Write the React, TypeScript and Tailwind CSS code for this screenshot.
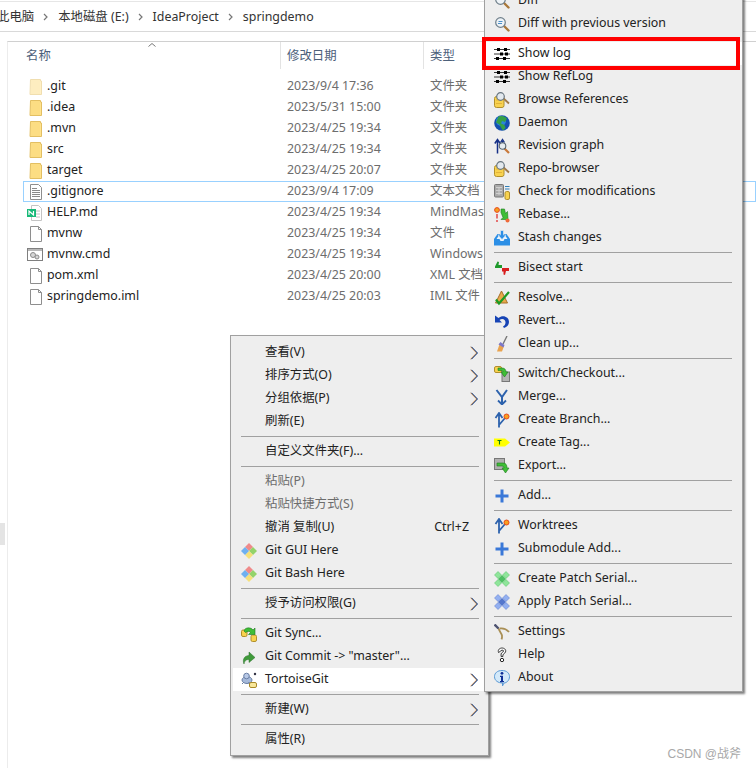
import type { ReactNode } from "react";

const Ico = ({ children }: { children: ReactNode }) => (
  <svg viewBox="0 0 16 16" className="w-4 h-4 shrink-0">
    {children}
  </svg>
);

/* ---- explorer icons ---- */
const Folder = ({ faded }: { faded?: boolean }) => (
  <svg viewBox="0 0 14 16" className={`w-[14px] h-4 shrink-0 ${faded ? "opacity-50" : ""}`}>
    <path d="M1.5 .5h10v1.500h1v13.500h-11.500z" fill="#ffe38f" stroke="#e3bf62" />
    <path d="M2 1h9v14h-9z" fill="#fcdd83" />
  </svg>
);
const Blank = () => (
  <svg viewBox="0 0 14 16" className="w-[14px] h-4 shrink-0">
    <path d="M1.500 .5h8l3 3v12h-11z" fill="#fff" stroke="#8e8e8e" />
    <path d="M9.500 .5v3h3" fill="none" stroke="#8e8e8e" />
  </svg>
);
const TextDoc = () => (
  <svg viewBox="0 0 14 16" className="w-[14px] h-4 shrink-0">
    <path d="M1.500 .5h8l3 3v12h-11z" fill="#fff" stroke="#8e8e8e" />
    <path d="M3 4.500h5M3 6.500h8M3 8.500h8M3 10.500h8M3 12.500h8" stroke="#8a8a8a" />
  </svg>
);
const MindDoc = () => (
  <svg viewBox="0 0 16 16" className="w-4 h-4 shrink-0 -ml-[2px]">
    <path d="M4.500 .5h7l3 3v12h-10z" fill="#fff" stroke="#c4c4c4" />
    <path d="M9 6h4M9 9h4M9 12h4" stroke="#c0c0c0" />
    <rect x="0" y="4" width="9" height="8" fill="#17b978" />
    <path d="M2 10v-4l4.500 4v-4" fill="none" stroke="#fff" strokeWidth="1.200" />
  </svg>
);
const CmdDoc = () => (
  <svg viewBox="0 0 16 16" className="w-4 h-4 shrink-0 -ml-[2px]">
    <rect x=".5" y="1.500" width="15" height="12" fill="#fff" stroke="#7f7f7f" />
    <rect x="1" y="2" width="14" height="2" fill="#b8b8b8" />
    <circle cx="6" cy="8" r="2.500" fill="#d6d6d6" stroke="#8a8a8a" />
    <circle cx="10" cy="10" r="2" fill="#d6d6d6" stroke="#8a8a8a" />
  </svg>
);

/* ---- menu icons ---- */
const Lens = ({ doc }: { doc?: boolean }) => (
  <Ico>
    <path d="M10 10l4.500 4.500" stroke="#a9783a" strokeWidth="2.400" strokeLinecap="round" />
    <circle cx="6.500" cy="6.500" r="4.800" fill="#eef3f7" stroke="#6f7f8a" strokeWidth="1.200" />
    {doc && <path d="M4.500 5.500h4M4 7.500h4" stroke="#4d90c8" />}
  </Ico>
);
const LogLines = () => (
  <Ico>
    <path d="M0 3.500h16M0 8h16M0 12.500h16" stroke="#333" />
    <path d="M3 2h3v3h-3zM10 2h3v3h-3zM6 6.500h3v3h-3zM11 6.500h3v3h-3zM2 11h3v3h-3zM9 11h3v3h-3z" fill="#000" />
  </Ico>
);
const RepoLens = () => (
  <Ico>
    <rect x=".5" y="4.500" width="9.500" height="11" rx="2" fill="#f8d24f" stroke="#b08f2c" />
    <path d="M2 8h6M2 11.500h6" stroke="#e2b33a" />
    <path d="M9 6l6 5.500" stroke="#a07a48" strokeWidth="1.800" />
    <circle cx="6.500" cy="4.500" r="3.800" fill="#e3e9ee" stroke="#68757f" strokeWidth="1.200" />
  </Ico>
);
const Globe = () => (
  <Ico>
    <circle cx="8" cy="8" r="7.800" fill="#1450b0" />
    <circle cx="7" cy="6" r="5" fill="#2a86d8" />
    <path d="M4.500 1.500c3-1.200 6.500-.5 8.500 2l-2 3.500-3-1-1 2.500 3.500 1.500 1 3-2.500 2.500-2-3-1.500-3-3.500-2z" fill="#35a046" />
  </Ico>
);
const RevGraph = () => (
  <Ico>
    <path d="M3.500 15.500v-13M.8 5.500l2.700-4 2.700 4" fill="none" stroke="#142f86" strokeWidth="1.500" />
    <path d="M8.500 8v-5M6.500 4.500l2-3 2 3" fill="none" stroke="#142f86" strokeWidth="1.300" />
    <path d="M10.500 10.500l4.500 4.500" stroke="#c9793a" strokeWidth="2.200" />
    <circle cx="8.500" cy="8" r="3.300" fill="#e6ecf0" stroke="#56636d" strokeWidth="1.100" />
  </Ico>
);
const CheckMods = () => (
  <Ico>
    <rect x=".5" y=".5" width="9" height="12.500" rx="1" fill="#a9a9a9" stroke="#777" />
    <path d="M2 3.500h6M2 6.500h6M2 9.500h6M5 3v8" stroke="#cfcfcf" />
    <path d="M11 2.500h4.500M11 5h4.500" stroke="#2f7fb8" strokeWidth="1.100" />
    <rect x="11" y="7.500" width="4.500" height="8" rx="1.500" fill="#f8d24f" stroke="#b08f2c" />
  </Ico>
);
const Rebase = () => (
  <Ico>
    <circle cx="3" cy="3" r="2.400" fill="#f4a020" stroke="#e8481c" />
    <path d="M3 7v4.500M3 13v2" stroke="#e02020" strokeWidth="1.200" />
    <path d="M7 2h3.500l1 4.500 2-2 .5 8h-7l2-2-2-5z" fill="#3fbe37" stroke="#1e7a1e" strokeWidth=".6" />
    <circle cx="13.500" cy="13.500" r="2" fill="#ef6a3a" />
  </Ico>
);
const Stash = () => (
  <Ico>
    <path d="M0 9l3.500-5h9l3.500 5v6.500h-16z" fill="#2c8fe6" />
    <path d="M2.500 9h3l1 2h3l1-2h3l-2-3h-7z" fill="#e9f4fd" />
    <path d="M6.500 .5h3v4.500h2.500l-4 4.500-4-4.500h2.500z" fill="#2c8fe6" stroke="#eee" strokeWidth=".6" />
  </Ico>
);
const Bisect = () => (
  <Ico>
    <path d="M1 6.500l2.500-5 1.500.5-.5 3h3.500v3h-7z" fill="#1f9a2c" />
    <path d="M8 8h7v3h-3l-1 4-1.500-.5v-3h-1.500z" fill="#d81e1e" />
  </Ico>
);
const Resolve = () => (
  <Ico>
    <path d="M7.500 1l6 12h-12z" fill="#e9a94a" stroke="#a5702a" />
    <path d="M2 9.500l3 4 10-11.500" fill="none" stroke="#1c9a22" strokeWidth="2.200" />
  </Ico>
);
const Revert = () => (
  <Ico>
    <path d="M1 2.500v7h7l-2.500-2.500c3-2 6-.5 6 2.500 0 2-1 3-2.500 4l1 1.500c3-1 5-3 5-6 0-5-6-7.500-10.500-4z" fill="#1744b5" />
  </Ico>
);
const Broom = () => (
  <Ico>
    <path d="M13 0l-4 8" stroke="#777" strokeWidth="1.400" />
    <path d="M6 7l4 3-2 5.500h-5z" fill="#e9a34e" />
    <path d="M6.500 6l4 3-1 2.500-5-3z" fill="#7c78c8" />
  </Ico>
);
const SwitchIco = () => (
  <Ico>
    <rect x=".5" y=".5" width="7" height="6" rx="1.500" fill="#f8d24f" stroke="#b08f2c" />
    <rect x="8" y="6" width="7.500" height="9.500" fill="#b4b4b4" stroke="#777" />
    <path d="M4 2h4c3 0 4 2 4 4h2l-3.500 5-3.500-5h2c0-1-1-1.500-2-1.500h-3z" fill="#3fbe37" stroke="#1e7a1e" strokeWidth=".6" />
  </Ico>
);
const Merge = () => (
  <Ico>
    <path d="M2.500 1l5.500 7 5-7M8 8v6" fill="none" stroke="#2d62ad" strokeWidth="2" />
    <path d="M4 11.500l4 4 4-4" fill="none" stroke="#2d62ad" strokeWidth="1.800" />
  </Ico>
);
const Branch = () => (
  <Ico>
    <path d="M5 15.500v-14M1.500 6l3.500-5 3.500 5M5 13l6-7" fill="none" stroke="#2d62ad" strokeWidth="1.800" />
    <circle cx="12.500" cy="4.500" r="2.500" fill="#f7a01f" stroke="#e8481c" />
  </Ico>
);
const TagIco = () => (
  <Ico>
    <path d="M0 3.500h11l5 4-5 4h-11z" fill="#ffff00" />
    <path d="M3.500 5.500h4M5.500 5.500v4" stroke="#0a7a10" strokeWidth="1.100" />
  </Ico>
);
const ExportIco = () => (
  <Ico>
    <rect x=".5" y=".5" width="10" height="11" fill="#b0b0b0" stroke="#777" />
    <path d="M3 5h6c3 0 4 2 4 5h2l-3.500 5-3.500-5h2c0-1-1-2-2-2h-5z" fill="#3fbe37" stroke="#1e7a1e" strokeWidth=".6" />
  </Ico>
);
const Add = () => (
  <Ico>
    <path d="M6.500 1.500h3v5h5v3h-5v5h-3v-5h-5v-3h5z" fill="#3a78d8" />
  </Ico>
);
const Patch = ({ c, d }: { c: string; d: string }) => (
  <Ico>
    <path d="M4 .5l3.500 3.500-3.500 3.500-3.500-3.500zM12 .5l3.500 3.500-3.500 3.500-3.500-3.500zM4 8.500l3.500 3.500-3.500 3.500-3.500-3.500zM12 8.500l3.500 3.500-3.500 3.500-3.500-3.500z" fill={c} stroke={d} strokeWidth=".5" />
    <path d="M8 4l4 4-4 4-4-4z" fill={d} />
  </Ico>
);
const Settings = () => (
  <Ico>
    <path d="M4.500 4c.5 3 3 5 3.500 7.500.2 1.500 0 2.700-.5 3.800" fill="none" stroke="#a98f55" strokeWidth="1.800" />
    <path d="M6 4.500c3.500-.5 6.500.8 9 3.500" fill="none" stroke="#a98f55" strokeWidth="1.800" />
    <path d="M.5 .5l4 4" stroke="#4d5270" strokeWidth="2.400" />
  </Ico>
);
const Help = () => (
  <Ico>
    <path d="M4.500 5.500c-1-3 1.500-4.500 3.500-4.500s4.500 1.500 3.500 4c-.5 1.500-2.300 1.700-2.600 3v1.500h-1.800v-2.500c.2-1.500 2.200-1.600 2.500-3 .2-1-2.300-1.300-2.800 0z" fill="#fff" stroke="#222" strokeWidth=".9" />
    <circle cx="8" cy="13" r="1.700" fill="#fff" stroke="#222" />
  </Ico>
);
const About = () => (
  <Ico>
    <path d="M8 .5c4.500 0 7.500 2.500 7.500 6.200s-3 6.300-5.500 6.300l-1.500 3v-3c-4.500 0-8-2.500-8-6.300s3-6.200 7.500-6.200z" fill="#d3e9f9" stroke="#5b9ad6" />
    <circle cx="8" cy="3.300" r="1.400" fill="#0f2f96" />
    <path d="M6 5.700h3v5.300h1v1.300h-4v-1.300h1v-4h-1z" fill="#0f2f96" />
  </Ico>
);
const GitIco = () => (
  <Ico>
    <path d="M8 0l4 4-4 4-4-4z" fill="#ef8a8a" />
    <path d="M12 4l4 4-4 4-4-4z" fill="#93d36a" />
    <path d="M8 8l4 4-4 4-4-4z" fill="#f6e07a" />
    <path d="M4 4l4 4-4 4-4-4z" fill="#6fb0f0" />
  </Ico>
);
const GitSync = () => (
  <Ico>
    <rect x=".5" y="4" width="5.500" height="6.500" rx="1.500" fill="#f8d24f" stroke="#b08f2c" />
    <rect x="10" y="9" width="5.500" height="6.500" rx="1.500" fill="#f8d24f" stroke="#b08f2c" />
    <path d="M3 5c1-4 7-4 9-1l2-2v6.500h-6.500l2-2c-1-1.500-3-1.500-5 0z" fill="#3fbe37" stroke="#1e7a1e" strokeWidth=".6" />
  </Ico>
);
const GitCommit = () => (
  <Ico>
    <path d="M3 15c-2-5 1-8.500 5-8.500v-3.500l6 5.500-6 5v-3c-2.500 0-4.500 1-5 4.500z" fill="#3f9a3a" stroke="#2a6f2a" strokeWidth=".5" />
  </Ico>
);
const Tortoise = () => (
  <Ico>
    <ellipse cx="6" cy="8" rx="5" ry="3.500" fill="#a5b9da" stroke="#6a7fa5" />
    <circle cx="5.500" cy="4" r="2.800" fill="#b7c8e6" stroke="#6a7fa5" />
    <circle cx="14" cy="2" r="1.200" fill="#334" />
    <path d="M1 12l2-2M9 12l-1.500-2" stroke="#6a7fa5" />
    <rect x="8.500" y="10.500" width="7" height="5" rx="1.500" fill="#f8e79a" stroke="#a98a2a" />
  </Ico>
);

/* fringed like ClearType: orange on the left, blue on the right */
const Chevron = () => (
  <svg viewBox="0 0 9 14" className="w-[9px] h-[14px] shrink-0">
    <path d="M.6 .8l6 6.200-6 6.200" fill="none" stroke="#e8964a" strokeWidth="1" />
    <path d="M1.600 .8l6 6.200-6 6.200" fill="none" stroke="#2f5fb0" strokeWidth="1" />
    <path d="M1.100 .8l6 6.200-6 6.200" fill="none" stroke="#333" strokeWidth=".5" />
  </svg>
);

const Sep = ({ left }: { left?: boolean }) => (
  <div className={`h-[7px] flex items-center ${left ? "ml-[10px] mr-[9px]" : "ml-[9px] mr-[10px]"}`}>
    <div className="h-px w-full bg-[#a0a0a0]" />
  </div>
);

type Row = {
  label: string;
  icon?: ReactNode;
  arrow?: boolean;
  muted?: boolean;
  hot?: boolean;
  shortcut?: string;
} | null;

const rightItems: Row[] = [
  { label: "Diff", icon: <Lens /> },
  { label: "Diff with previous version", icon: <Lens doc /> },
  null,
  { label: "Show log", icon: <LogLines />, hot: true },
  { label: "Show RefLog", icon: <LogLines /> },
  { label: "Browse References", icon: <RepoLens /> },
  { label: "Daemon", icon: <Globe /> },
  { label: "Revision graph", icon: <RevGraph /> },
  { label: "Repo-browser", icon: <RepoLens /> },
  { label: "Check for modifications", icon: <CheckMods /> },
  { label: "Rebase...", icon: <Rebase /> },
  { label: "Stash changes", icon: <Stash /> },
  null,
  { label: "Bisect start", icon: <Bisect /> },
  null,
  { label: "Resolve...", icon: <Resolve /> },
  { label: "Revert...", icon: <Revert /> },
  { label: "Clean up...", icon: <Broom /> },
  null,
  { label: "Switch/Checkout...", icon: <SwitchIco /> },
  { label: "Merge...", icon: <Merge /> },
  { label: "Create Branch...", icon: <Branch /> },
  { label: "Create Tag...", icon: <TagIco /> },
  { label: "Export...", icon: <ExportIco /> },
  null,
  { label: "Add...", icon: <Add /> },
  null,
  { label: "Worktrees", icon: <Branch /> },
  { label: "Submodule Add...", icon: <Add /> },
  null,
  { label: "Create Patch Serial...", icon: <Patch c="#8fe59a" d="#4fbf63" /> },
  { label: "Apply Patch Serial...", icon: <Patch c="#93b0f0" d="#5577cc" /> },
  null,
  { label: "Settings", icon: <Settings /> },
  { label: "Help", icon: <Help /> },
  { label: "About", icon: <About /> },
];

const leftItems: Row[] = [
  { label: "查看(V)", arrow: true },
  { label: "排序方式(O)", arrow: true },
  { label: "分组依据(P)", arrow: true },
  { label: "刷新(E)" },
  null,
  { label: "自定义文件夹(F)..." },
  null,
  { label: "粘贴(P)", muted: true },
  { label: "粘贴快捷方式(S)", muted: true },
  { label: "撤消 复制(U)", shortcut: "Ctrl+Z" },
  { label: "Git GUI Here", icon: <GitIco /> },
  { label: "Git Bash Here", icon: <GitIco /> },
  null,
  { label: "授予访问权限(G)", arrow: true },
  null,
  { label: "Git Sync...", icon: <GitSync /> },
  { label: 'Git Commit -> "master"...', icon: <GitCommit /> },
  { label: "TortoiseGit", icon: <Tortoise />, arrow: true, hot: true },
  null,
  { label: "新建(W)", arrow: true },
  null,
  { label: "属性(R)" },
];

const files = [
  { name: ".git", date: "2023/9/4 17:36", type: "文件夹", icon: <Folder faded /> },
  { name: ".idea", date: "2023/5/31 15:00", type: "文件夹", icon: <Folder /> },
  { name: ".mvn", date: "2023/4/25 19:34", type: "文件夹", icon: <Folder /> },
  { name: "src", date: "2023/4/25 19:34", type: "文件夹", icon: <Folder /> },
  { name: "target", date: "2023/4/25 20:07", type: "文件夹", icon: <Folder /> },
  { name: ".gitignore", date: "2023/9/4 17:09", type: "文本文档", icon: <TextDoc />, selected: true },
  { name: "HELP.md", date: "2023/4/25 19:34", type: "MindMaster 文档", icon: <MindDoc /> },
  { name: "mvnw", date: "2023/4/25 19:34", type: "文件", icon: <Blank /> },
  { name: "mvnw.cmd", date: "2023/4/25 19:34", type: "Windows 命令脚本", icon: <CmdDoc /> },
  { name: "pom.xml", date: "2023/4/25 20:00", type: "XML 文档", icon: <Blank /> },
  { name: "springdemo.iml", date: "2023/4/25 20:03", type: "IML 文件", icon: <Blank /> },
];

const Crumb = () => (
  <svg viewBox="0 0 6 8" className="w-[6px] h-2 mx-[9px]">
    <path d="M1 1l3 3-3 3" fill="none" stroke="#777" strokeWidth="1.200" />
  </svg>
);

export default function App() {
  return (
    <div className="relative w-[756px] h-[768px] overflow-hidden bg-white text-[12.4px] font-['Noto_Sans','Noto_Sans_CJK_SC',sans-serif]">
      {/* Address bar */}
      <div className="h-[31px] mt-px pt-px border-t border-t-[#e6e6e6] border-b border-b-[#d9d9d9] flex items-center text-[#333] -ml-[3px]">
        <span>此电脑</span>
        <Crumb />
        <span>本地磁盘 (E:)</span>
        <Crumb />
        <span>IdeaProject</span>
        <Crumb />
        <span>springdemo</span>
      </div>

      {/* File list */}
      <div className="mt-[9px] ml-[7px] h-[727px] border-l border-l-[#ececec] border-t border-t-[#d0d0d0]">
        <div className="relative h-[27px] flex items-center text-[#4c607a]">
          <div className="w-[273px] pl-[18px] pt-px border-r border-r-[#e3e3e3] h-full flex items-center">名称</div>
          <div className="w-[143px] pl-[6px] pt-px border-r border-r-[#e3e3e3] h-full flex items-center">修改日期</div>
          <div className="pl-[6px] pt-px">类型</div>
          <svg viewBox="0 0 8 4" className="absolute left-[140px] top-[1px] w-2 h-1">
            <path d="M.5 3.500l3.500-3 3.500 3" fill="none" stroke="#777" />
          </svg>
        </div>
        <div className="mt-[7px] flex flex-col">
          {files.map((f) => (
            <div
              key={f.name}
              className={`h-[21px] ml-[15px] flex items-center whitespace-nowrap border ${
                f.selected ? "border-[#99d1ff]" : "border-transparent"
              }`}
            >
              <div className="w-[23px] pl-[5px] flex justify-start">{f.icon}</div>
              <div className="w-[240px] text-[#222]">{f.name}</div>
              <div className="w-[143px] text-[#6d6d6d]">{f.date}</div>
              <div className="text-[#6d6d6d]">{f.type}</div>
            </div>
          ))}
        </div>
      </div>

      {/* Nav pane leftovers */}
      <div className="absolute left-0 top-[523px] w-[5px] h-[22px] bg-[#e4e4e4]" />

      {/* Explorer context menu */}
      <div className="absolute left-[230px] top-[335px] w-[259px] h-[421px] pt-[5px] bg-[#eeeeee] border border-[#a0a0a0] shadow-[2px_2px_2px_rgba(0,0,0,0.5)] text-[#222]">
        {leftItems.map((it, i) =>
          it === null ? (
            <Sep left key={i} />
          ) : (
            <div
              key={i}
              className={`h-[23px] ml-[2px] mr-[4px] flex items-center whitespace-nowrap ${it.hot ? "bg-white" : ""} ${
                it.muted ? "text-[#6d6d6d]" : ""
              }`}
            >
              <div className="w-[32px] pl-[8px] shrink-0">{it.icon}</div>
              <span className="flex-1">{it.label}</span>
              {it.shortcut && <span className="mr-[15px]">{it.shortcut}</span>}
              {it.arrow && (
                <span className="mr-[5px]">
                  <Chevron />
                </span>
              )}
            </div>
          ),
        )}
      </div>

      {/* TortoiseGit submenu */}
      <div className="absolute left-[484px] top-[-15px] w-[259px] h-[707px] pt-[3px] bg-[#eeeeee] border border-[#a0a0a0] shadow-[2px_2px_2px_rgba(0,0,0,0.5)] text-[#222]">
        {rightItems.map((it, i) =>
          it === null ? (
            <Sep key={i} />
          ) : (
            <div key={i} className={`h-[23px] flex items-center whitespace-nowrap ${it.hot ? "bg-white" : ""}`}>
              <div className="w-[33px] pl-[9px] shrink-0">{it.icon}</div>
              <span>{it.label}</span>
            </div>
          ),
        )}
      </div>

      {/* Annotation box */}
      <div className="absolute left-[482px] top-[37px] w-[258px] h-[33px] border-[4px] border-[#ff0000]" />

      <div className="absolute right-[15px] top-[745px] text-[12px] text-[#a8a8a8] bg-white font-['Liberation_Sans','Noto_Sans_CJK_SC',sans-serif]">
        CSDN @战斧
      </div>
    </div>
  );
}
